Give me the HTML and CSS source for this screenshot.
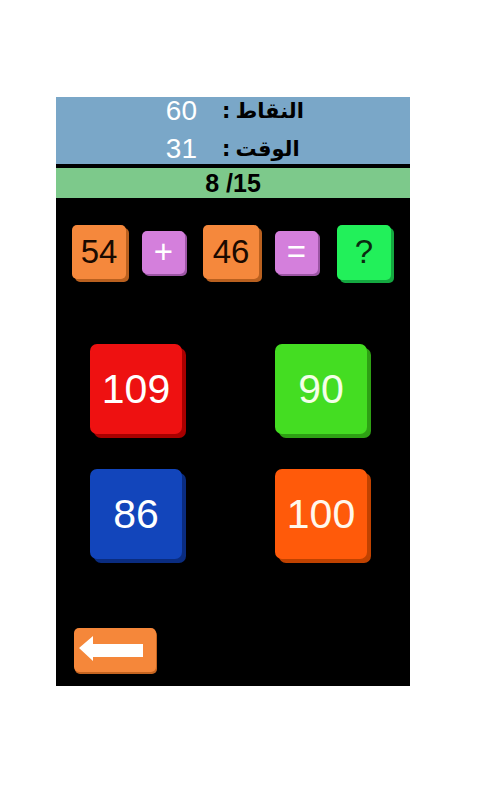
FILE: index.html
```html
<!DOCTYPE html>
<html lang="ar">
<head>
<meta charset="utf-8">
<link rel="stylesheet" href="styles.css">
</head>
<body>
<div class="app">
  <div class="stats">
    <div class="stat-row"><span class="val">60</span><span class="colon">:</span><span class="label">النقاط</span></div>
    <div class="stat-row"><span class="val">31</span><span class="colon">:</span><span class="label">الوقت</span></div>
  </div>
  <div class="progress" dir="ltr">8 /15</div>
  <div class="equation">
    <div class="tile num first">54</div>
    <div class="tile op plus">+</div>
    <div class="tile num second">46</div>
    <div class="tile op equals">=</div>
    <div class="tile ask">?</div>
  </div>
  <div class="answers">
    <div class="ans red">109</div>
    <div class="ans green">90</div>
    <div class="ans blue">86</div>
    <div class="ans orange">100</div>
  </div>
  <div class="back">
    <svg width="82" height="44" viewBox="0 0 82 44"><polygon points="5,20 19,8 19,16 69,16 69,29 19,29 19,33" fill="#ffffff"/></svg>
  </div>
</div>
</body>
</html>
```
FILE: styles.css
```css
html, body { margin: 0; padding: 0; background: #ffffff; }
body { font-family: "Liberation Sans", Arial, sans-serif; }
.app {
  margin: 97px 0 0 56px;
  width: 354px;
  height: 589px;
  background: #000000;
  display: flex;
  flex-direction: column;
}
.stats {
  background: #7aa7c8;
  height: 67px;
  border-bottom: 4px solid #000;
  display: flex;
  flex-direction: column;
  gap: 10px;
}
.stat-row {
  display: flex;
  align-items: center;
  height: 28px;
  line-height: 28px;
}
.val {
  width: 141px;
  text-align: right;
  color: #ffffff;
  font-size: 28px;
}
.colon {
  margin-left: 25px;
  font-family: "DejaVu Sans", sans-serif;
  font-weight: bold;
  font-size: 21px;
  color: #000;
}
.label {
  margin-left: 5px;
  font-family: "DejaVu Sans", sans-serif;
  font-weight: bold;
  font-size: 21px;
  color: #000;
  direction: rtl;
}
.progress {
  background: #7dc98b;
  height: 30px;
  line-height: 31px;
  text-align: center;
  font-weight: bold;
  font-size: 25px;
  color: #000;
}
.equation {
  display: flex;
  align-items: center;
  padding-left: 16px;
  margin-top: 25px;
  height: 58px;
}
.tile {
  display: flex;
  align-items: center;
  justify-content: center;
  border-radius: 5px;
  font-size: 33px;
}
.num {
  height: 54px;
  background: #f5883c;
  box-shadow: 3px 3px 0 #b9601f;
  color: #1a0a00;
}
.first { width: 54px; }
.second { width: 56px; margin-left: 18px; }
.op {
  width: 43px; height: 43px;
  background: #d47fdc;
  box-shadow: 2px 2px 0 #9c55a4;
  color: #ffffff;
}
.plus { margin-left: 16px; }
.equals { margin-left: 16px; }
.ask {
  width: 54px; height: 55px;
  background: #22f05a;
  box-shadow: 3px 3px 0 #14a840;
  color: #0a2a10;
  margin-left: 19px;
}
.answers {
  display: grid;
  grid-template-columns: 92px 92px;
  column-gap: 93px;
  row-gap: 35px;
  padding-left: 34px;
  margin-top: 63px;
}
.ans {
  height: 90px;
  border-radius: 7px;
  display: flex;
  align-items: center;
  justify-content: center;
  font-size: 41px;
  color: #ffffff;
}
.red { background: #ee1111; box-shadow: 4px 4px 0 #a80000; }
.green { background: #44dd22; box-shadow: 4px 4px 0 #2ea014; color: #f4ffe8; }
.blue { background: #1245bb; box-shadow: 4px 4px 0 #0a2c80; }
.orange { background: #ff5a0a; box-shadow: 4px 4px 0 #c04200; color: #fff8ec; }
.back {
  margin: 69px 0 0 18px;
  width: 82px;
  height: 44px;
  background: #f5873a;
  border-radius: 5px;
  box-shadow: 1px 2px 0 #c56420;
}
.back svg { display: block; }
```
